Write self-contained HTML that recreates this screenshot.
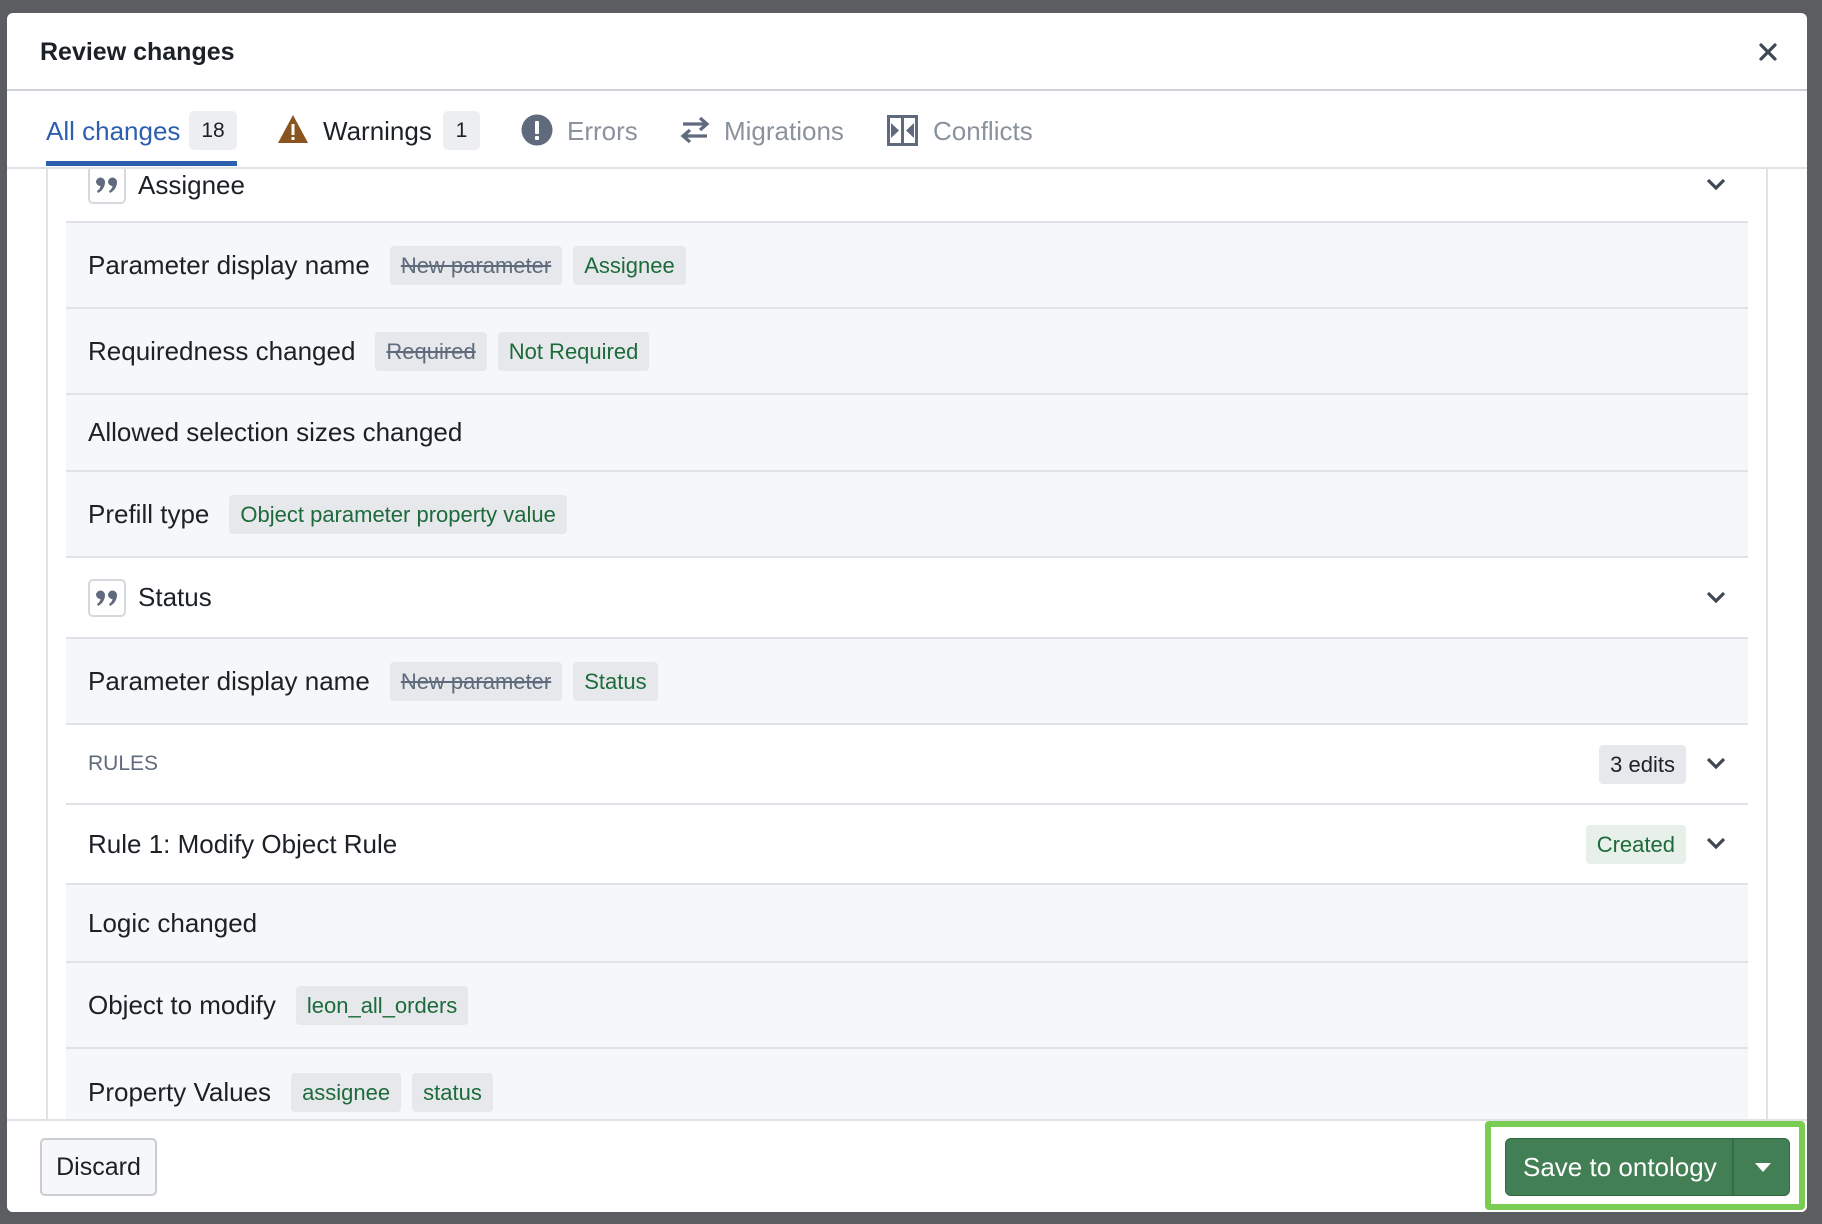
<!DOCTYPE html>
<html><head><meta charset="utf-8"><style>
*{box-sizing:border-box;margin:0;padding:0}
body{width:1822px;height:1224px;background:#5c5d61;font-family:"Liberation Sans",sans-serif;position:relative;overflow:hidden;color:#1c2127}
.a{position:absolute}
.modal{left:7px;top:13px;width:1800px;height:1199px;background:#fff;border-radius:6px;overflow:hidden}
.row{position:absolute;left:59px;width:1682px;border-bottom:2px solid #dfe2e6;background:#f6f7f9;display:flex;align-items:center;padding-left:22px;font-size:26px}
.row.w{background:#fff}
.tag{display:inline-block;background:#e6e8ec;border-radius:4px;font-size:22px;color:#1d6b3a;height:39px;line-height:39px;padding:0 11px;margin-left:11px}
.tag.s{color:#5f6b7c;text-decoration:line-through}
.q{width:38px;height:38px;border:2px solid #d5d9de;border-radius:5px;display:flex;align-items:center;justify-content:center;margin-right:12px}
.chev{position:absolute;right:22px;top:50%;margin-top:-7px}
.tab{position:absolute;top:99px;font-size:26px;line-height:38px;color:#8a929c}
.badge{position:absolute;top:98px;height:39px;background:#eceef1;border-radius:5px;font-size:21px;line-height:39px;text-align:center;color:#1c2127}
.cont{position:absolute;left:0;top:156px;width:1800px;height:950px;overflow:hidden}
</style></head><body>
<div class="a modal">
 <div class="a" style="left:33px;top:22px;font-size:25px;font-weight:bold;line-height:34px">Review changes</div>
 <svg class="a" style="left:1752px;top:30px" width="18" height="18" viewBox="0 0 18 18"><path d="M2 2L16 16M16 2L2 16" stroke="#404854" stroke-width="3.2" stroke-linecap="round"/></svg>
 <div class="a" style="left:0;top:76px;width:1800px;height:2px;background:#cfd3d8"></div>
 <div class="tab" style="left:39px;color:#2d5faf">All changes</div>
 <div class="badge" style="left:182px;width:48px">18</div>
 <div class="a" style="left:39px;top:148px;width:191px;height:5px;background:#2d5faf"></div>
 <svg class="a" style="left:270px;top:101px" width="32" height="30" viewBox="0 0 32 30"><path d="M16 1L31 29H1Z" fill="#8a5421"/><rect x="14.5" y="10" width="3" height="11" fill="#fff"/><rect x="14.5" y="23" width="3" height="3" fill="#fff"/></svg>
 <div class="tab" style="left:316px;color:#1c2127">Warnings</div>
 <div class="badge" style="left:436px;width:37px">1</div>
 <svg class="a" style="left:514px;top:101px" width="32" height="32" viewBox="0 0 32 32"><circle cx="16" cy="16" r="15.5" fill="#5f6b7c"/><rect x="14" y="7" width="4" height="13" rx="1" fill="#fff"/><rect x="14" y="22" width="4" height="4" rx="1" fill="#fff"/></svg>
 <div class="tab" style="left:560px">Errors</div>
 <svg class="a" style="left:673px;top:102px" width="30" height="30" viewBox="0 0 30 30"><path d="M3 9H26M20 3L27 9L20 15M27 21H4M10 15L3 21L10 27" stroke="#5f6b7c" stroke-width="3.2" fill="none"/></svg>
 <div class="tab" style="left:717px">Migrations</div>
 <svg class="a" style="left:880px;top:102px" width="31" height="31" viewBox="0 0 31 31"><rect x="1.5" y="1.5" width="28" height="28" fill="none" stroke="#5f6b7c" stroke-width="3"/><path d="M15.5 1V30" stroke="#5f6b7c" stroke-width="3"/><path d="M4 8L12 15.5L4 23ZM27 8L19 15.5L27 23Z" fill="#5f6b7c"/></svg>
 <div class="tab" style="left:926px">Conflicts</div>
 <div class="a" style="left:0;top:154px;width:1800px;height:2px;background:#dfe2e6"></div>
 <div class="cont">
 <div class="a" style="left:39px;top:0;width:1722px;height:950px;border-left:2px solid #dfe2e6;border-right:2px solid #dfe2e6"></div>
 <div class="a" style="left:59px;top:0;width:2px;height:950px;background:#dfe2e6"></div>
 <div class="a" style="left:1739px;top:0;width:2px;height:950px;background:#dfe2e6"></div>
 <div class="row w" style="top:-20px;height:74px"><div class="q"><svg width="24" height="18" viewBox="0 0 24 18"><path d="M1 6a4.5 4.5 0 1 1 9 0c0 5-3 9-7 11l-1-2c2-1.3 3.3-3 3.5-5A4.5 4.5 0 0 1 1 6ZM13 6a4.5 4.5 0 1 1 9 0c0 5-3 9-7 11l-1-2c2-1.3 3.3-3 3.5-5A4.5 4.5 0 0 1 13 6Z" fill="#5f6b7c"/></svg></div>Assignee<svg class="chev" width="20" height="13" viewBox="0 0 20 13"><path d="M2 2L10 10L18 2" stroke="#404854" stroke-width="3.2" fill="none"/></svg></div>
 <div class="row" style="top:54px;height:86px">Parameter display name<span class="tag s" style="margin-left:20px">New parameter</span><span class="tag">Assignee</span></div>
 <div class="row" style="top:140px;height:86px">Requiredness changed<span class="tag s" style="margin-left:20px">Required</span><span class="tag">Not Required</span></div>
 <div class="row" style="top:226px;height:77px">Allowed selection sizes changed</div>
 <div class="row" style="top:303px;height:86px">Prefill type<span class="tag" style="margin-left:20px">Object parameter property value</span></div>
 <div class="row w" style="top:389px;height:81px"><div class="q"><svg width="24" height="18" viewBox="0 0 24 18"><path d="M1 6a4.5 4.5 0 1 1 9 0c0 5-3 9-7 11l-1-2c2-1.3 3.3-3 3.5-5A4.5 4.5 0 0 1 1 6ZM13 6a4.5 4.5 0 1 1 9 0c0 5-3 9-7 11l-1-2c2-1.3 3.3-3 3.5-5A4.5 4.5 0 0 1 13 6Z" fill="#5f6b7c"/></svg></div>Status<svg class="chev" width="20" height="13" viewBox="0 0 20 13"><path d="M2 2L10 10L18 2" stroke="#404854" stroke-width="3.2" fill="none"/></svg></div>
 <div class="row" style="top:470px;height:86px">Parameter display name<span class="tag s" style="margin-left:20px">New parameter</span><span class="tag">Status</span></div>
 <div class="row w" style="top:556px;height:80px;font-size:21px;color:#5f6b7c">RULES<span class="tag" style="position:absolute;right:62px;top:20px;color:#1c2127">3 edits</span><svg class="chev" width="20" height="13" viewBox="0 0 20 13"><path d="M2 2L10 10L18 2" stroke="#404854" stroke-width="3.2" fill="none"/></svg></div>
 <div class="row w" style="top:636px;height:80px">Rule 1: Modify Object Rule<span class="tag" style="position:absolute;right:62px;top:20px;background:#e7f1ea">Created</span><svg class="chev" width="20" height="13" viewBox="0 0 20 13"><path d="M2 2L10 10L18 2" stroke="#404854" stroke-width="3.2" fill="none"/></svg></div>
 <div class="row" style="top:716px;height:78px">Logic changed</div>
 <div class="row" style="top:794px;height:86px">Object to modify<span class="tag" style="margin-left:20px">leon_all_orders</span></div>
 <div class="row" style="top:880px;height:86px;border-bottom:none">Property Values<span class="tag" style="margin-left:20px">assignee</span><span class="tag">status</span></div>
 </div>
 <div class="a" style="left:0;top:1106px;width:1800px;height:93px;background:#fff;border-top:2px solid #dfe2e6"></div>
 <div class="a" style="left:33px;top:1125px;width:117px;height:58px;border:2px solid #c9cdd2;border-radius:5px;background:#f6f7f9;font-size:25px;line-height:54px;text-align:center">Discard</div>
 <div class="a" style="left:1478px;top:1108px;width:320px;height:89px;border:6px solid #7acd53;border-radius:4px"></div>
 <div class="a" style="left:1498px;top:1125px;width:285px;height:58px;background:#437f55;border:1px solid #2f6a40;border-radius:6px;color:#fff;font-size:26px;line-height:56px"><span style="padding-left:17px">Save to ontology</span><div class="a" style="left:226px;top:0;width:2px;height:56px;background:#356c45"></div><svg class="a" style="left:248px;top:23px" width="18" height="11" viewBox="0 0 18 11"><path d="M1 1H17L9 10Z" fill="#fff"/></svg></div>
</div>
</body></html>
